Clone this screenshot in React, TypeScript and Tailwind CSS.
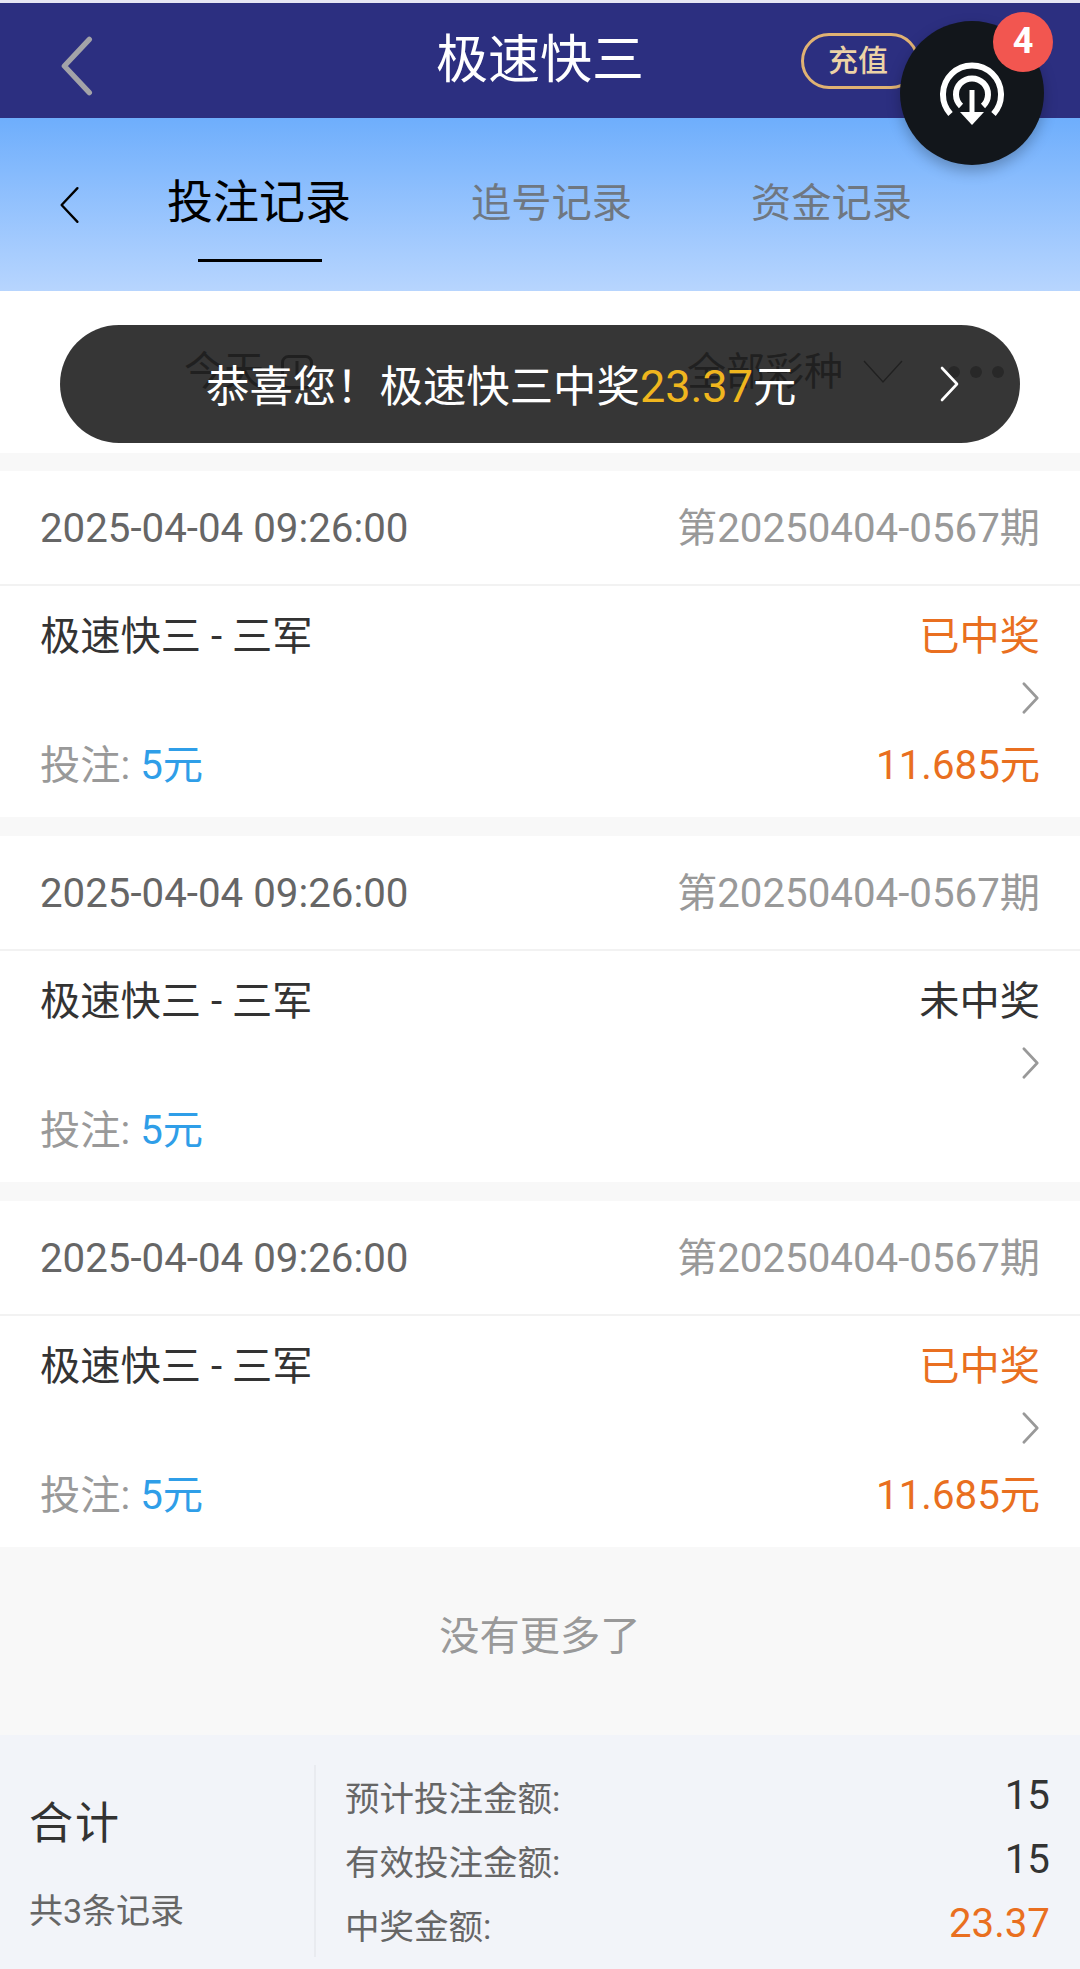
const orange = 'text-[#e96f20]'

function Chevron({ left, className }: { left?: boolean; className: string }) {
  return (
    <svg viewBox="0 0 20 36" fill="none" className={className}>
      <path d={left ? 'M18 2 3 18l15 16' : 'M2 2l15 16L2 34'} stroke="currentColor" strokeWidth="inherit" strokeLinecap="round" strokeLinejoin="round" />
    </svg>
  )
}

function RecordCard({ won }: { won: boolean }) {
  return (
    <div className="bg-white">
      <div className="h-[115px] flex items-center justify-between px-10 pt-[4px] border-b-2 border-[#f2f2f2]">
        <span className="text-[#666666]">2025-04-04 09:26:00</span>
        <span className="text-[#999999]">第20250404-0567期</span>
      </div>
      <div className="h-[231px] px-10 pt-[26px] flex flex-col">
        <div className="flex justify-between h-[50px] items-center">
          <span className="text-[#333333]">极速快三 - 三军</span>
          <span className={won ? orange : 'text-[#333333]'}>{won ? '已中奖' : '未中奖'}</span>
        </div>
        <div className="flex justify-end mt-[20px]">
          <Chevron className="w-[18px] h-[32px] text-[#999999] [stroke-width:3]" />
        </div>
        <div className="flex justify-between items-center h-[50px] mt-[27px]">
          <span className="text-[#999999]">
            投注: <span className="text-[#2f9ee8]">5元</span>
          </span>
          {won && <span className={orange}>11.685元</span>}
        </div>
      </div>
    </div>
  )
}

function SummaryRow({ label, value, hot }: { label: string; value: string; hot?: boolean }) {
  return (
    <div className="flex justify-between items-center h-[64px]">
      <span className="text-[34.5px] text-[#666666]">{label}</span>
      <span className={hot ? `${orange} pb-[6px]` : 'text-[#333333] pb-[6px]'}>{value}</span>
    </div>
  )
}

export default function App() {
  return (
    <div className="relative w-[1080px] h-[1969px] overflow-hidden bg-[#f8f8f8] text-[40.25px] leading-none [font-family:Roboto,'Noto_Sans_CJK_SC',sans-serif]">
      <div className="h-[3px] bg-[#e6e6f4]" />

      {/* Title bar */}
      <header className="relative h-[115px] bg-[#2c2f80] flex items-center justify-center">
        <Chevron left className="absolute left-[59px] top-[33px] w-[34px] h-[60px] text-[#a3a3a8] [stroke-width:3.2]" />
        <h1 className="text-[52px] text-white font-normal">极速快三</h1>
        <div className="absolute left-[801px] top-[30px] w-[118px] h-[56px] rounded-full border-[3px] border-[#e0b273] flex items-center pl-[24px] text-[30px] font-medium text-[#ecd3a6]">
          充值
        </div>
      </header>

      {/* Tabs */}
      <nav className="h-[173px] bg-gradient-to-b from-[#6eaefc] to-[#b7d5fe] flex pl-[58px]">
        <Chevron left className="w-[22px] h-[38px] mt-[68px] text-black [stroke-width:2.2]" />
        <div className="relative ml-[87px] mt-[61px]">
          <span className="text-[46px] text-black block">投注记录</span>
          <div className="absolute left-[31px] top-[80px] w-[124px] h-[3px] bg-black" />
        </div>
        <span className="ml-[120px] mt-[66px] text-[#6f7781]">追号记录</span>
        <span className="ml-[119px] mt-[66px] text-[#6f7781]">资金记录</span>
      </nav>

      {/* Filter row, mostly hidden by the toast */}
      <div className="h-[162px] bg-white">
        <div className="flex items-center pt-[61px] pl-[184px] text-[#999999] text-[40px]">
          <span>今天</span>
          <svg viewBox="0 0 32 34" fill="none" className="ml-[17px] w-[32px] h-[34px]">
            <rect x="1.5" y="1.5" width="29" height="31" rx="6" stroke="#999999" strokeWidth="3" />
            <path d="M16 6v14" stroke="#999999" strokeWidth="3" />
          </svg>
          <span className="ml-[374px] text-[39px]">全部彩种</span>
          <svg viewBox="0 0 40 24" fill="none" className="ml-[20px] w-[40px] h-[24px]">
            <path d="M1 1l19 21L39 1" stroke="#999999" strokeWidth="1.5" />
          </svg>
          <div className="ml-[45px] flex gap-[10px]">
            <i className="w-[12px] h-[12px] rounded-full bg-[#bdbdbd]" />
            <i className="w-[12px] h-[12px] rounded-full bg-[#bdbdbd]" />
            <i className="w-[12px] h-[12px] rounded-full bg-[#bdbdbd]" />
          </div>
        </div>
      </div>

      <div className="mt-[18px] flex flex-col gap-[19px]">
        <RecordCard won />
        <RecordCard won={false} />
        <RecordCard won />
      </div>

      <div className="h-[188px] pb-[7px] flex items-center justify-center text-[#999999]">没有更多了</div>

      {/* Totals */}
      <footer className="h-[234px] bg-[#f2f4f9] flex pt-[30px]">
        <div className="w-[316px] h-[192px] border-r-2 border-[#e9ebf0] pl-[29px] flex flex-col">
          <span className="mt-[37px] text-[44px] tracking-[2px] text-[#333333]">合计</span>
          <span className="mt-[48px] text-[34px] text-[#666666]">共3条记录</span>
        </div>
        <div className="flex-1 pl-[29px] pr-[30px] pt-[2px]">
          <SummaryRow label="预计投注金额:" value="15" />
          <SummaryRow label="有效投注金额:" value="15" />
          <SummaryRow label="中奖金额:" value="23.37" hot />
        </div>
      </footer>

      {/* Win toast */}
      <div className="absolute left-[60px] top-[325px] w-[960px] h-[118px] rounded-full bg-black/[0.79] flex items-center pl-[146px] pt-[6px] text-white text-[43.4px]">
        <span>
          恭喜您！极速快三中奖<span className="text-[45px] text-[#f0b61e]">23.37</span>元
        </span>
        <Chevron className="absolute left-[880px] top-[41px] w-[20px] h-[36px] text-white [stroke-width:2.6]" />
      </div>

      {/* Floating audio button */}
      <div className="absolute left-[900px] top-[21px] w-[144px] h-[144px] rounded-full bg-[#12161b] shadow-[0_6px_14px_rgba(0,0,0,0.25)] flex items-center justify-center">
        <svg viewBox="0 0 64 64" fill="none" className="w-[64px] h-[64px] mt-[2px]">
          <path d="M10.5 52A29 29 0 1 1 53.5 52" stroke="white" strokeWidth="6" />
          <path d="M21 44A16 16 0 1 1 43 44" stroke="white" strokeWidth="6" />
          <path d="M32 28v24" stroke="white" strokeWidth="5" />
          <path d="M20 50h24L32 63z" fill="white" />
        </svg>
        <div className="absolute left-[93px] top-[-9px] w-[60px] h-[60px] rounded-full bg-[#f25650] flex items-center justify-center pb-[3px] text-[36px] font-bold text-white">
          4
        </div>
      </div>
    </div>
  )
}
